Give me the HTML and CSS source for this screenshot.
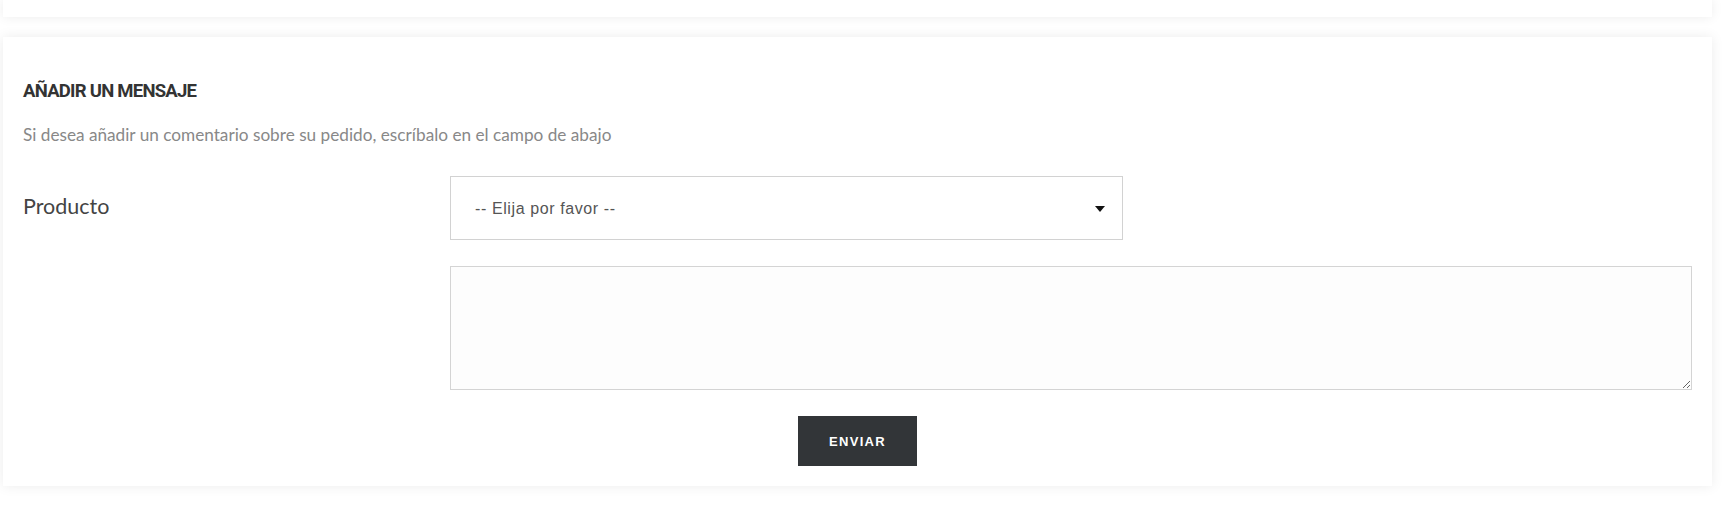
FILE: index.html
```html
<!DOCTYPE html>
<html lang="es">
<head>
    <meta charset="UTF-8">
    <meta name="viewport" content="width=device-width, initial-scale=1.0">
    <title>Añadir un mensaje</title>
    <link rel="stylesheet" href="styles.css">
</head>
<body>
    <div class="panel panel-top"></div>

    <div class="panel message-box">
        <h3 class="box-title">AÑADIR UN MENSAJE</h3>
        <p class="box-hint">Si desea añadir un comentario sobre su pedido, escríbalo en el campo de abajo</p>

        <form class="message-form" onsubmit="return false">
            <div class="form-row">
                <label class="form-label" for="product">Producto</label>
                <div class="select-wrap">
                    <select id="product" class="form-select">
                        <option>-- Elija por favor --</option>
                    </select>
                    <svg class="select-arrow" width="10" height="6" viewBox="0 0 10 6">
                        <path d="M0 0 L10 0 L5 6 Z" fill="#111"/>
                    </svg>
                </div>
            </div>
            <div class="form-row">
                <span></span>
                <textarea class="form-text" rows="4"></textarea>
            </div>
            <div class="form-actions">
                <button type="submit" class="btn-send">ENVIAR</button>
            </div>
        </form>
    </div>
</body>
</html>
```

FILE: styles.css
```css
* {
    margin: 0;
    padding: 0;
    box-sizing: border-box;
}

body {
    background: #fff;
    padding: 0 13px 22px 3px;
    font-family: 'Lato', sans-serif;
}

.panel {
    background: #fff;
    box-shadow: 0 0 12px rgba(0,0,0,0.08);
}

.panel-top {
    height: 17px;
    margin-bottom: 20px;
}

.message-box {
    padding: 43px 20px 20px 20px;
}

.box-title {
    font-family: 'Roboto', sans-serif;
    font-weight: bold;
    font-size: 18.5px;
    line-height: 22px;
    letter-spacing: -0.75px;
    color: #333;
}

.box-hint {
    margin-top: 21px;
    font-size: 17.2px;
    line-height: 24px;
    color: #888;
}

.message-form {
    margin-top: 29px;
}

.form-row {
    display: grid;
    grid-template-columns: 427px 1fr;
    margin-bottom: 26px;
}

.form-label {
    font-size: 21.5px;
    line-height: 60px;
    color: #444;
}

.select-wrap {
    position: relative;
    width: 673px;
}

.form-select {
    appearance: none;
    -webkit-appearance: none;
    width: 100%;
    height: 64px;
    padding: 0 40px 0 24px;
    border: 1px solid #d2d2d2;
    border-radius: 0;
    background: #fff;
    font-family: 'Liberation Sans', 'Arial', sans-serif;
    font-size: 16px;
    letter-spacing: 0.6px;
    color: #555;
    outline: none;
}

.select-arrow {
    position: absolute;
    right: 18px;
    top: 30px;
    pointer-events: none;
}

.form-text {
    display: block;
    width: 100%;
    height: 124px;
    border: 1px solid #d4d4d4;
    border-radius: 0;
    background: #fdfdfd;
    padding: 10px;
    font-family: 'Liberation Sans', sans-serif;
    font-size: 15px;
    outline: none;
}

.form-actions {
    text-align: center;
}

.btn-send {
    width: 119px;
    height: 50px;
    background: #323538;
    color: #fff;
    border: none;
    border-radius: 0;
    font-family: 'Liberation Sans', sans-serif;
    font-size: 13px;
    font-weight: 600;
    letter-spacing: 1.3px;
    cursor: pointer;
}

.btn-send:hover {
    background: #222;
}
```
